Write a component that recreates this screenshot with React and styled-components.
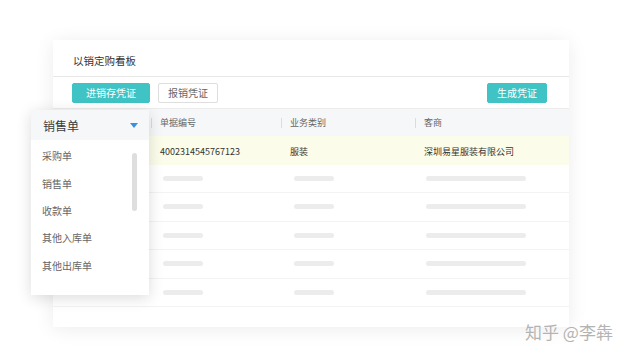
import React from 'react';
import styled, { createGlobalStyle } from 'styled-components';

const GlobalStyle = createGlobalStyle`
    html, body {
        margin: 0;
        padding: 0;
        background: #ffffff;
    }
    body {
        font-family: "Noto Sans CJK SC", "Noto Sans", "Liberation Sans", sans-serif;
    }
`;

const rows = [
    { id: '4002314545767123', type: '服装', client: '深圳易星服装有限公司', active: true },
    {}, {}, {}, {}, {}
];

const menuItems = ['采购单', '销售单', '收款单', '其他入库单', '其他出库单'];

class App extends React.Component {
    render() {
        return (
            <Page>
                <GlobalStyle />
                <Card>
                    <Title>以销定购看板</Title>
                    <Toolbar>
                        <Button primary pad={13}>进销存凭证</Button>
                        <Button pad={9}>报销凭证</Button>
                        <Spacer />
                        <Button primary pad={9}>生成凭证</Button>
                    </Toolbar>
                    <Table>
                        <HeadRow>
                            <Cell />
                            <Cell />
                            <HeadCell>单据编号</HeadCell>
                            <HeadCell>业务类别</HeadCell>
                            <HeadCell>客商</HeadCell>
                        </HeadRow>
                        {rows.map((row, i) => (
                            <Row key={i} active={row.active}>
                                {row.active ? (
                                    <>
                                        <Cell />
                                        <Cell />
                                        <Cell>{row.id}</Cell>
                                        <Cell>{row.type}</Cell>
                                        <Cell>{row.client}</Cell>
                                    </>
                                ) : (
                                    <>
                                        <Cell><Bar width={14} offset={26} /></Cell>
                                        <Cell><Bar width={12} offset={23} /></Cell>
                                        <Cell><Bar width={40} offset={12} /></Cell>
                                        <Cell><Bar width={40} offset={13} /></Cell>
                                        <Cell><Bar width={100} offset={11} /></Cell>
                                    </>
                                )}
                            </Row>
                        ))}
                    </Table>
                </Card>
                <Dropdown>
                    <DropHead>
                        <span>销售单</span>
                        <Caret />
                    </DropHead>
                    <DropList>
                        {menuItems.map((item) => (
                            <DropItem key={item}>{item}</DropItem>
                        ))}
                        <Scrollbar />
                    </DropList>
                </Dropdown>
                <Watermark>知乎 @李犇</Watermark>
            </Page>
        );
    }
}

export default App;

const Page = styled.div`
    position: relative;
    width: 640px;
    height: 360px;
    overflow: hidden;
    padding: 40px 0 0 53px;
    box-sizing: border-box;
`;

const Card = styled.div`
    width: 516px;
    height: 287px;
    background: #fff;
    box-shadow: 0 2px 18px rgba(0, 0, 0, 0.08);
    display: flex;
    flex-direction: column;
`;

const Title = styled.div`
    height: 37px;
    box-sizing: border-box;
    border-bottom: 1px solid #e8e8e8;
    display: flex;
    align-items: center;
    padding: 5px 20px 0;
    font-size: 10.5px;
    color: #333;
`;

const Toolbar = styled.div`
    height: 32px;
    box-sizing: border-box;
    border-bottom: 1px solid #ececec;
    display: flex;
    align-items: center;
    gap: 8px;
    padding: 0 22px 0 19px;
`;

const Spacer = styled.div`
    flex: 1;
`;

const Button = styled.div`
    height: 20px;
    box-sizing: border-box;
    padding: 0 ${(p) => p.pad}px;
    display: flex;
    align-items: center;
    font-size: 10px;
    border-radius: 2px;
    background: ${(p) => (p.primary ? '#40c3c4' : '#fff')};
    color: ${(p) => (p.primary ? '#fff' : '#666')};
    border: 1px solid ${(p) => (p.primary ? '#40c3c4' : '#dedede')};
`;

const Table = styled.div`
    display: flex;
    flex-direction: column;
`;

const HeadRow = styled.div`
    display: grid;
    grid-template-columns: 49px 49px 130px 134px 1fr;
    height: 27px;
    background: #f6f7f9;
    align-items: center;
`;

const HeadCell = styled.div`
    position: relative;
    padding-left: 9px;
    font-size: 9px;
    color: #666;
    &::before {
        content: '';
        position: absolute;
        left: 0;
        top: 50%;
        margin-top: -5px;
        width: 1px;
        height: 10px;
        background: #dcdcdc;
    }
`;

const Row = styled.div`
    display: grid;
    grid-template-columns: 49px 49px 130px 134px 1fr;
    height: 28.5px;
    box-sizing: border-box;
    padding-top: ${(p) => (p.active ? '3px' : '0')};
    align-items: center;
    background: ${(p) => (p.active ? '#fbfce9' : '#fff')};
    border-bottom: 1px solid ${(p) => (p.active ? '#fbfce9' : '#f3f3f3')};
`;

const Cell = styled.div`
    padding-left: 9px;
    font-size: 9px;
    color: #333;
    white-space: nowrap;
`;

const Bar = styled.div`
    width: ${(p) => p.width}px;
    height: 5px;
    margin-left: ${(p) => p.offset - 9}px;
    border-radius: 3px;
    background: #ececec;
`;

const Dropdown = styled.div`
    position: absolute;
    left: 31px;
    top: 110px;
    width: 118px;
    height: 185px;
    background: #fff;
    box-shadow: 0 3px 14px rgba(0, 0, 0, 0.14);
    display: flex;
    flex-direction: column;
`;

const DropHead = styled.div`
    height: 30px;
    background: #f6f7f9;
    display: flex;
    align-items: center;
    justify-content: space-between;
    padding: 0 11px 0 12px;
    font-size: 12px;
    font-weight: 400;
    color: #3a3a3a;
`;

const Caret = styled.div`
    width: 0;
    height: 0;
    border-left: 4px solid transparent;
    border-right: 4px solid transparent;
    border-top: 5px solid #3c8fe0;
`;

const DropList = styled.div`
    position: relative;
    flex: 1;
    padding-top: 2px;
    display: flex;
    flex-direction: column;
`;

const DropItem = styled.div`
    height: 27.4px;
    display: flex;
    align-items: center;
    padding-left: 11px;
    font-size: 10px;
    color: #666;
`;

const Scrollbar = styled.div`
    position: absolute;
    left: 101px;
    top: 13px;
    width: 5px;
    height: 58px;
    border-radius: 3px;
    background: #dedede;
`;

const Watermark = styled.div`
    position: absolute;
    left: 525px;
    top: 323px;
    font-size: 17px;
    line-height: 1;
    color: #b3b3b3;
    text-shadow: 0 0 1px #fff, 0 0 1px #fff;
`;
